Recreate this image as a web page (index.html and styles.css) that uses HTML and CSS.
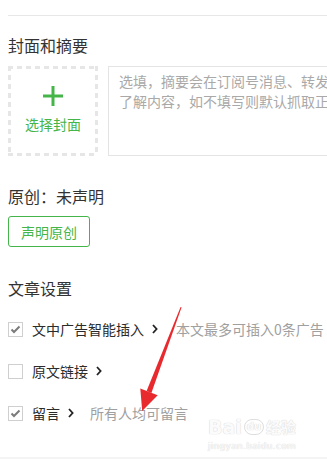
FILE: index.html
```html
<!DOCTYPE html>
<html lang="zh-CN">
<head>
<meta charset="utf-8">
<title>封面和摘要</title>
<link rel="stylesheet" href="styles.css">
</head>
<body>
<div class="page">
  <div class="rule"></div>

  <h2 class="title title-cover">封面和摘要</h2>
  <div class="cover-row">
    <div class="cover-pick">
      <svg class="plus" width="20" height="20" viewBox="0 0 20 20"><rect x="8.5" y="0" width="3" height="20" fill="#44b549"/><rect x="0" y="8.5" width="20" height="3" fill="#44b549"/></svg>
      <span class="cover-label">选择封面</span>
    </div>
    <div class="digest">选填，摘要会在订阅号消息、转发链接等文章外的场景显露，帮助读者快速<br>了解内容，如不填写则默认抓取正文前54字</div>
  </div>

  <h2 class="title title-orig">原创：未声明</h2>
  <button class="btn-orig">声明原创</button>

  <h2 class="title title-settings">文章设置</h2>
  <div class="setting-list">
    <div class="setting">
      <span class="check checked"><svg width="13" height="13" viewBox="0 0 13 13"><polyline points="2.5,6.5 5,9 10.5,3.5" fill="none" stroke="#7b7b7b" stroke-width="2"/></svg></span>
      <span class="label">文中广告智能插入</span>
      <svg class="chev" width="6" height="10" viewBox="0 0 6 10"><polyline points="1,1 4.6,5 1,9" fill="none" stroke="#222" stroke-width="1.8"/></svg>
      <span class="hint hint-wide">本文最多可插入0条广告</span>
    </div>
    <div class="setting">
      <span class="check"></span>
      <span class="label">原文链接</span>
      <svg class="chev" width="6" height="10" viewBox="0 0 6 10"><polyline points="1,1 4.6,5 1,9" fill="none" stroke="#222" stroke-width="1.8"/></svg>
    </div>
    <div class="setting">
      <span class="check checked"><svg width="13" height="13" viewBox="0 0 13 13"><polyline points="2.5,6.5 5,9 10.5,3.5" fill="none" stroke="#7b7b7b" stroke-width="2"/></svg></span>
      <span class="label">留言</span>
      <svg class="chev" width="6" height="10" viewBox="0 0 6 10"><polyline points="1,1 4.6,5 1,9" fill="none" stroke="#222" stroke-width="1.8"/></svg>
      <span class="hint">所有人均可留言</span>
    </div>
  </div>
</div>
<div class="bottom-rule"></div>

<div class="watermark">
  <div class="wm-main"><span class="wm-bai">Bai</span><span class="wm-du">du</span><span class="wm-jy">经验</span></div>
  <div class="wm-url">jingyan.baidu.com</div>
</div>

<svg class="arrow" width="327" height="465" viewBox="0 0 327 465">
  <polygon points="180.6,307 181.6,307.3 151.4,392.9 146.6,391.1" fill="#e8292d"/>
  <polygon points="140.3,388.6 157.7,395.2 142.2,411" fill="#e8292d"/>
</svg>
</body>
</html>
```

FILE: styles.css
```css
html, body {
  margin: 0;
  padding: 0;
  background: #fff;
  overflow: hidden;
}
body {
  width: 327px;
  height: 465px;
  position: relative;
  font-family: "Noto Sans CJK SC", "Noto Sans", sans-serif;
  color: #333;
}
.page {
  padding: 15px 0 0 8px;
}
.rule {
  height: 1px;
  background: #e7e7e7;
}
.title {
  margin: 0;
  font-size: 16px;
  font-weight: normal;
  line-height: 22px;
  color: #333;
}
.title-cover { margin-top: 18px; }
.title-orig { margin-top: 29px; }
.title-settings { margin-top: 30px; }

.cover-row {
  display: flex;
  gap: 10px;
  margin-top: 10px;
  height: 90px;
}
.cover-pick {
  flex: none;
  width: 90px;
  height: 90px;
  box-sizing: border-box;
  display: flex;
  flex-direction: column;
  align-items: center;
  padding-top: 20px;
  background:
    linear-gradient(90deg, #e6e6e6 5px, transparent 5px) left top / 9px 3px repeat-x,
    linear-gradient(90deg, #e6e6e6 5px, transparent 5px) left bottom / 9px 3px repeat-x,
    linear-gradient(180deg, #e6e6e6 5px, transparent 5px) left top / 3px 9px repeat-y,
    linear-gradient(180deg, #e6e6e6 5px, transparent 5px) right top / 3px 9px repeat-y;
}
.plus { display: block; }
.cover-label {
  margin-top: 8px;
  font-size: 14px;
  line-height: 20px;
  color: #44b549;
}
.digest {
  flex: none;
  width: 480px;
  height: 90px;
  box-sizing: border-box;
  border: 1px solid #e4e4e4;
  padding: 4px 10px;
  font-size: 14px;
  line-height: 20px;
  color: #a9a9a9;
  white-space: nowrap;
}

.btn-orig {
  display: block;
  margin-top: 9px;
  width: 82px;
  height: 31px;
  padding: 0;
  border: 1px solid #44b549;
  border-radius: 3px;
  background: #fff;
  color: #44b549;
  font-family: inherit;
  font-size: 14px;
  line-height: 20px;
}

.setting-list {
  display: flex;
  flex-direction: column;
  gap: 22px;
  margin-top: 20px;
}
.setting {
  display: flex;
  align-items: center;
  height: 20px;
  font-size: 14px;
  line-height: 20px;
}
.check {
  flex: none;
  width: 15px;
  height: 15px;
  box-sizing: border-box;
  border: 1px solid #cfcfcf;
  display: flex;
  align-items: center;
  justify-content: center;
}
.check svg { display: block; }
.label {
  margin-left: 9px;
  color: #2b2b2b;
}
.chev {
  flex: none;
  margin-left: 8px;
  display: block;
}
.hint {
  margin-left: 16px;
  color: #a0a0a0;
  white-space: nowrap;
}
.hint-wide { margin-left: 18px; }

.bottom-rule {
  position: absolute;
  left: 0;
  right: 0;
  top: 457px;
  height: 2px;
  background: #f4f4f4;
}

.watermark {
  position: absolute;
  left: 208px;
  top: 410px;
  width: 96px;
  font-family: "DejaVu Sans", sans-serif;
  color: #fbfbfb;
  text-shadow: 0 0 1px #d8d8d8, 0 0 1px #d8d8d8;
  pointer-events: none;
}
.wm-main {
  display: flex;
  align-items: flex-end;
  height: 28px;
}
.wm-bai {
  font-size: 19px;
  font-weight: bold;
  line-height: 22px;
}
.wm-du {
  font-size: 10px;
  font-weight: bold;
  line-height: 14px;
  border: 1px solid #dedede;
  border-radius: 8px;
  padding: 0 2px;
  margin: 0 2px 3px;
}
.wm-jy {
  font-family: "Noto Sans CJK SC", sans-serif;
  font-size: 15px;
  font-weight: bold;
  line-height: 22px;
}
.wm-url {
  font-size: 9px;
  line-height: 12px;
  margin-top: 2px;
  letter-spacing: 0.3px;
}

.arrow {
  position: absolute;
  left: 0;
  top: 0;
  pointer-events: none;
}
```
